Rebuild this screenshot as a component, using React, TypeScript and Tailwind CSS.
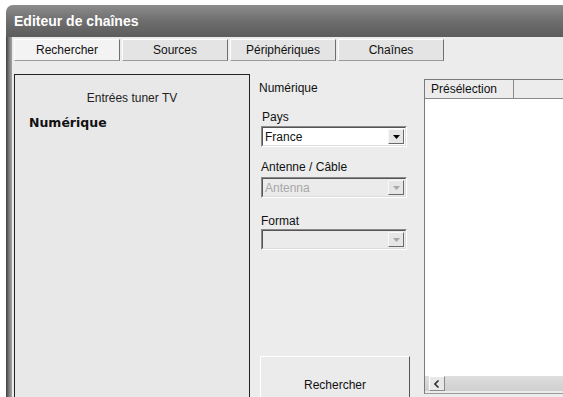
import React from "react";

const font = { fontFamily: '"Liberation Sans", Arial, sans-serif' };

function Tab({ label, active }: { label: string; active?: boolean }) {
  return (
    <div
      className={`flex h-[22px] w-[106px] items-center justify-center border border-t-white border-l-white border-r-[#6f6f6f] border-b-[#9a9a9a] text-[12px] leading-[14px] text-[#111] ${
        active ? "bg-[#f3f3f3]" : "bg-[#e4e4e4]"
      }`}
    >
      {label}
    </div>
  );
}

function Combo({ value, disabled }: { value?: string; disabled?: boolean }) {
  return (
    <div className="h-[21px] w-[146px] border border-t-[#8a8a8a] border-l-[#8a8a8a] border-r-white border-b-white">
      <div
        className={`flex h-full items-center border border-t-[#555] border-l-[#555] border-r-[#dcdcdc] border-b-[#dcdcdc] pl-[2px] pr-[1px] ${
          disabled ? "bg-[#ebebeb]" : "bg-white"
        }`}
      >
        <span className={`flex-1 text-[12px] leading-[14px] ${disabled ? "text-[#a8a8a8]" : "text-[#111]"}`}>
          {value}
        </span>
        <div className="flex h-[15px] w-[16px] items-center justify-center border border-t-[#f8f8f8] border-l-[#f8f8f8] border-r-[#6a6a6a] border-b-[#6a6a6a] bg-[#e6e6e6]">
          <svg width="7" height="4" viewBox="0 0 7 4">
            <path d="M0 0h7L3.5 4z" fill={disabled ? "#a8a8a8" : "#000"} />
          </svg>
        </div>
      </div>
    </div>
  );
}

export default function App() {
  return (
    <div className="h-[397px] w-[563px] overflow-hidden bg-white" style={font}>
      <div className="ml-[6px] mt-[5px] flex h-[392px] flex-col overflow-hidden rounded-tl-[7px] bg-[#ececec]">
        {/* Title bar */}
        <div className="flex h-[32px] shrink-0 items-center bg-gradient-to-b from-[#8c8c8c] via-[#6e6e6e] to-[#5c5c5c] pl-[8px]">
          <span className="text-[14px] font-bold leading-[16px] text-white">Editeur de chaînes</span>
        </div>

        <div className="flex flex-1">
          {/* left frame */}
          <div className="w-[6px] shrink-0 bg-gradient-to-r from-[#3e3e3e] via-[#7a7a7a] to-[#a4a4a4]" />
          <div className="flex flex-1 flex-col bg-[#ececec] pl-[2px]">
            {/* Tabs */}
            <div className="mt-[2px] flex gap-[2px]">
              <Tab label="Rechercher" active />
              <Tab label="Sources" />
              <Tab label="Périphériques" />
              <Tab label="Chaînes" />
            </div>

            <div className="mt-[13px] flex flex-1">
              {/* left panel */}
              <div className="flex h-[330px] w-[236px] flex-col border border-[#222] border-b-0 bg-[#e8e8e8]">
                <div className="mt-[16px] text-center text-[12px] leading-[14px] text-[#222]">Entrées tuner TV</div>
                <div
                  className="ml-[14px] mt-[10px] text-[12.5px] font-bold leading-[16px] text-[#111]"
                  style={{ fontFamily: '"DejaVu Sans", sans-serif' }}
                >
                  Numérique
                </div>
              </div>

              {/* middle column */}
              <div className="flex w-[174px] flex-col pl-[9px] text-[12px] leading-[14px] text-[#111]">
                <div className="mt-[7px]">Numérique</div>
                <div className="ml-[3px] mt-[15px]">Pays</div>
                <div className="ml-[2px] mt-[2px]">
                  <Combo value="France" />
                </div>
                <div className="ml-[2px] mt-[13px]">Antenne / Câble</div>
                <div className="ml-[2px] mt-[3px]">
                  <Combo value="Antenna" disabled />
                </div>
                <div className="ml-[2px] mt-[16px]">Format</div>
                <div className="ml-[2px] mt-[1px]">
                  <Combo disabled />
                </div>
                <div className="ml-[1px] mt-[106px] flex h-[42px] w-[150px] items-end justify-center border border-t-white border-l-white border-r-[#555] border-b-0 bg-[#ebebeb] pb-[6px]">
                  Rechercher
                </div>
              </div>

              {/* right list */}
              <div className="mt-[5px] flex h-[315px] flex-1 flex-col border border-t-[#7a7a7a] border-l-[#7a7a7a] border-r-0 border-b-[#9a9a9a] bg-white">
                <div className="flex h-[19px] shrink-0">
                  <div className="flex w-[89px] items-center border-r border-b border-r-[#8a8a8a] border-b-[#8a8a8a] bg-[#ececec] pl-[6px] text-[12px] leading-[14px] text-[#111]">
                    Présélection
                  </div>
                  <div className="flex-1 border-b border-b-[#8a8a8a] bg-[#ececec]" />
                </div>
                <div className="flex-1" />
                <div className="flex h-[15px] shrink-0 bg-gradient-to-b from-[#dedede] to-[#cfcfcf]">
                  <div className="ml-[4px] flex w-[16px] items-center justify-center border border-t-white border-l-white border-r-[#8a8a8a] border-b-[#8a8a8a] bg-[#e8e8e8]">
                    <svg width="6" height="8" viewBox="0 0 6 8">
                      <path d="M4.5 0.5L1 4l3.5 3.5" stroke="#333" strokeWidth="1.6" fill="none" />
                    </svg>
                  </div>
                </div>
                <div className="h-[2px] shrink-0 bg-[#ececec]" />
              </div>
            </div>
          </div>
        </div>
      </div>
    </div>
  );
}
